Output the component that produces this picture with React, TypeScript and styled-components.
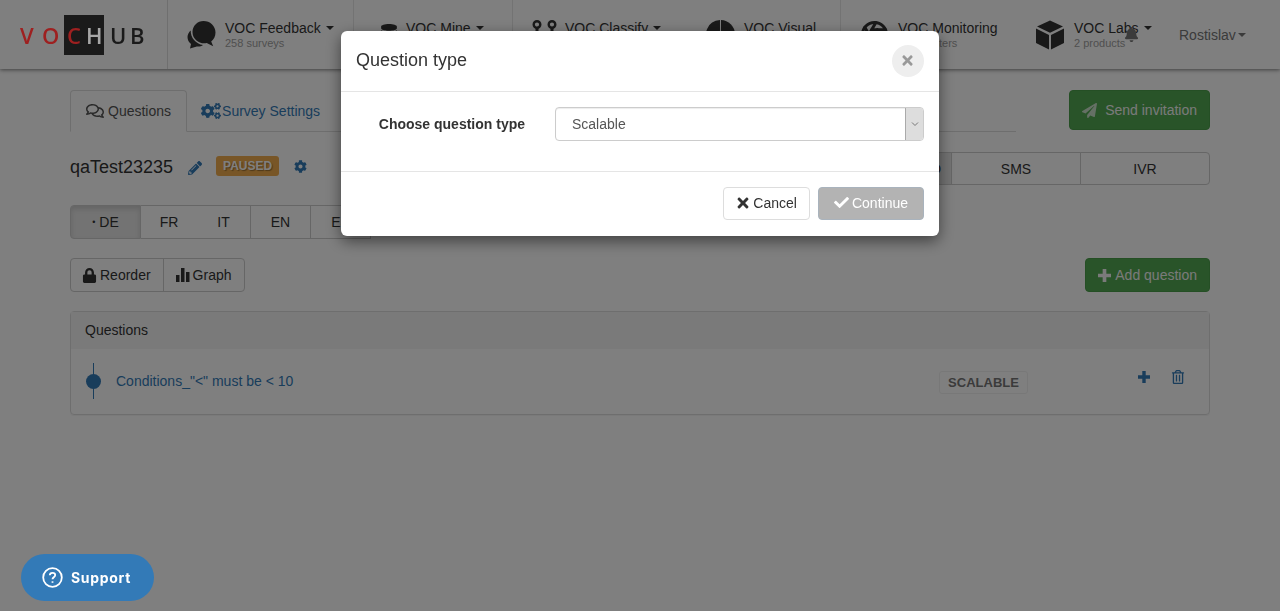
import React from "react";
import styled, { createGlobalStyle } from "styled-components";
import {
  FaBell,
  FaCheck,
  FaCog,
  FaCogs,
  FaDatabase,
  FaLock,
  FaPaperPlane,
  FaPencilAlt,
  FaRegComments,
  FaRegTrashAlt,
  FaTimes,
} from "react-icons/fa";
import { Aperture } from "lucide-react";

const GlobalStyle = createGlobalStyle`
  html, body {
    margin: 0;
    height: 100%;
    background: #fff;
    font-family: "Liberation Sans", Arial, sans-serif;
    font-size: 14px;
    color: #333;
    overflow: hidden;
  }
  * { box-sizing: border-box; }
`;

const BubblesIcon = () => (
  <svg width="29" height="29" viewBox="0 0 29 29" fill="#333">
    <path d="M16.500 1C23 1 28.500 5.800 28.500 12.500c0 3.800-1.700 6.900-4.300 9l2 4.800-6.500-3.200C13 24.500 5.500 19.800 5.500 12 5.500 5.800 10.500 1 16.500 1z" />
    <path d="M3.800 10.500C3.200 17.500 9 24 16 25c-1.800 1.300-4 1.800-6.200 1.400L3 28.500l1-4.500C1.800 22.300.5 19.800.5 17c0-2.500 1.300-5 3.300-6.500z" />
  </svg>
);

const PinsIcon = () => (
  <svg width="26" height="29" viewBox="0 0 26 29" fill="none" stroke="#333" strokeWidth="2.400">
    <circle cx="5" cy="4.500" r="3.300" />
    <path d="M5 8v16" strokeWidth="3" />
    <circle cx="20" cy="4.500" r="3.300" />
    <path d="M20 8v16" strokeWidth="3" />
  </svg>
);

const PieIcon = () => (
  <svg width="29" height="29" viewBox="0 0 28 28" fill="#333">
    <path d="M13.500 0v14l-9.800 9.500A14 14 0 0 1 13.500 0z" />
    <path d="M14.500 0A14 14 0 0 1 28 13.500H14.500z" />
    <path d="M15 15h13A14 14 0 0 1 5 25z" />
  </svg>
);

const CubeIcon = () => (
  <svg width="30" height="30" viewBox="0 0 30 30" fill="#333">
    <polygon points="15,0.500 28,6.500 15,12.800 2,6.500" />
    <polygon points="1,8.500 14,15 14,29.500 1,23" />
    <polygon points="29,8.500 16,15 16,29.500 29,23" />
  </svg>
);

const StatsIcon = () => (
  <svg width="14" height="14" viewBox="0 0 14 14" fill="#333">
    <rect x="0" y="7" width="3.500" height="7" />
    <rect x="5" y="0" width="3.500" height="14" />
    <rect x="10" y="4" width="3.500" height="10" />
  </svg>
);

const PlusIcon = ({ size }: { size: number }) => (
  <svg width={size} height={size} viewBox="0 0 12 12" fill="currentColor">
    <path d="M4.300 0h3.400v4.300H12v3.400H7.700V12H4.300V7.700H0V4.300h4.300z" />
  </svg>
);

const navItems = [
  { width: 186, pad: 19, gap: 9, border: true, icon: <BubblesIcon />, title: "VOC Feedback", sub: "258 surveys", caret: true },
  { width: 159, pad: 26, gap: 8, border: true, icon: <MineIcon />, title: "VOC Mine", sub: "12 sources", caret: true },
  { width: 173, pad: 19, gap: 7, border: false, icon: <PinsIcon />, title: "VOC Classify", sub: "3 models", caret: true },
  { width: 155, pad: 20, gap: 9, border: true, icon: <PieIcon />, title: "VOC Visual", sub: "8 charts", caret: false },
  { width: 175, pad: 19, gap: 9, border: false, icon: <Aperture size={29} color="#333" strokeWidth={2.500} />, title: "VOC Monitoring", sub: "12 reporters", caret: false },
];

const langs = ["DE", "FR", "IT", "EN", "ES"];

function MineIcon() {
  return (
    <MineIconWrap>
      <FaDatabase size={18} color="#333" />
    </MineIconWrap>
  );
}

export default function App() {
  return (
    <>
      <GlobalStyle />
      <Navbar>
        <Logo>
          <LogoLetter $tone="red" $width={22}>V</LogoLetter>
          <LogoLetter $tone="red" $width={22}>O</LogoLetter>
          <LogoBlock>
            <LogoLetter $tone="red" $width={19}>C</LogoLetter>
            <LogoLetter $tone="light" $width={18}>H</LogoLetter>
          </LogoBlock>
          <LogoTail>
            <LogoLetter $tone="dark" $width={20}>U</LogoLetter>
            <LogoLetter $tone="dark" $width={14}>B</LogoLetter>
          </LogoTail>
        </Logo>
        {navItems.map((item) => (
          <NavItem key={item.title} $width={item.width} $pad={item.pad} $gap={item.gap} $border={item.border}>
            <NavIcon>{item.icon}</NavIcon>
            <NavText>
              <NavTitle>
                {item.title}
                {item.caret && <Caret />}
              </NavTitle>
              <NavSub>{item.sub}</NavSub>
            </NavText>
          </NavItem>
        ))}
        <NavItem $width={151} $pad={19} $gap={9}>
          <NavIcon>
            <CubeIcon />
          </NavIcon>
          <NavText>
            <NavTitle>
              VOC Labs
              <Caret />
            </NavTitle>
            <NavSub>2 products</NavSub>
          </NavText>
          <Bell>
            <FaBell size={15} color="#777" />
          </Bell>
        </NavItem>
        <UserMenu>
          Rostislav
          <UserCaret />
        </UserMenu>
      </Navbar>

      <Page>
        <TabsRow>
          <Tabs>
            <Tab $active>
              <FaRegComments size={18} />
              Questions
            </Tab>
            <Tab>
              <FaCogs size={20} />
              Survey Settings
            </Tab>
          </Tabs>
          <SendButton>
            <FaPaperPlane size={15} />
            Send invitation
          </SendButton>
        </TabsRow>

        <TitleRow>
          <TitleGroup>
            <SurveyName>qaTest23235</SurveyName>
            <EditIcon>
              <FaPencilAlt size={14} />
            </EditIcon>
            <PausedBadge>PAUSED</PausedBadge>
            <SettingsIcon>
              <FaCog size={13} />
            </SettingsIcon>
          </TitleGroup>
          <Channels>
            <Channel $active>WEB / ANDROID</Channel>
            <Channel>SMS</Channel>
            <Channel>IVR</Channel>
          </Channels>
        </TitleRow>

        <LangRow>
          {langs.map((lang, i) => (
            <LangButton key={lang} $active={i === 0} $index={i}>
              {i === 0 && <LangDot>•</LangDot>}
              {lang}
            </LangButton>
          ))}
        </LangRow>

        <ToolsRow>
          <ToolGroup>
            <ToolButton>
              <LockWrap>
                <FaLock size={15} />
              </LockWrap>
              Reorder
            </ToolButton>
            <ToolButton>
              <StatsIcon />
              Graph
            </ToolButton>
          </ToolGroup>
          <AddButton>
            <PlusIcon size={13} />
            Add question
          </AddButton>
        </ToolsRow>

        <Panel>
          <PanelHeader>Questions</PanelHeader>
          <QuestionRow>
            <Timeline>
              <TimelineDot />
            </Timeline>
            <QuestionLink>Conditions_"&lt;" must be &lt; 10</QuestionLink>
            <TypeBadge>SCALABLE</TypeBadge>
            <RowActions>
              <PlusIcon size={12} />
              <FaRegTrashAlt size={14} />
            </RowActions>
          </QuestionRow>
        </Panel>
      </Page>

      <Overlay>
        <Modal>
          <ModalHeader>
            <ModalTitle>Question type</ModalTitle>
            <CloseButton>
              <FaTimes size={15} />
            </CloseButton>
          </ModalHeader>
          <ModalBody>
            <FieldLabel>Choose question type</FieldLabel>
            <SelectBox>
              <span>Scalable</span>
              <SelectArrow>
                <svg width="8" height="5" viewBox="0 0 8 5" fill="none" stroke="#777" strokeWidth="1">
                  <path d="M1 .5l3 3 3-3" />
                </svg>
              </SelectArrow>
            </SelectBox>
          </ModalBody>
          <ModalFooter>
            <CancelButton>
              <FaTimes size={16} />
              Cancel
            </CancelButton>
            <ContinueButton>
              <FaCheck size={15} />
              Continue
            </ContinueButton>
          </ModalFooter>
        </Modal>
      </Overlay>

      <SupportButton>
        <svg width="21" height="21" viewBox="0 0 21 21" fill="none" stroke="#fff" strokeWidth="1.800">
          <circle cx="10.500" cy="10.500" r="9.300" />
          <path d="M7.800 8.300c0-1.600 1.200-2.500 2.700-2.500s2.700.9 2.700 2.300c0 2.200-2.700 2.200-2.700 4.200" />
          <path d="M10.500 14.300v1.500" />
        </svg>
        Support
      </SupportButton>
    </>
  );
}

const Navbar = styled.header`
  display: flex;
  height: 69px;
  background: #fff;
  box-shadow: 0 1px 4px rgba(0, 0, 0, 0.5);
`;

const Logo = styled.div`
  position: relative;
  z-index: 1;
  width: 168px;
  flex: none;
  display: flex;
  align-items: center;
  padding-left: 20px;
  border-right: 1px solid #6f6f6f;
  font-family: "Open Sans", "Liberation Sans", sans-serif;
  font-size: 22px;
  font-weight: 600;
  line-height: 40px;
`;

const logoTones = { red: "#9e2020", light: "#a6a6a6", dark: "#1a1a1a" };

const LogoLetter = styled.span<{ $tone: keyof typeof logoTones; $width: number }>`
  width: ${({ $width }) => $width}px;
  color: ${({ $tone }) => logoTones[$tone]};
`;

const LogoBlock = styled.span`
  display: flex;
  width: 40px;
  height: 40px;
  padding-left: 3px;
  background: #1a1a1a;
`;

const LogoTail = styled.span`
  display: flex;
  margin-left: 6px;
`;

const NavItem = styled.div<{ $width: number; $pad: number; $gap: number; $border?: boolean }>`
  position: relative;
  width: ${({ $width }) => $width}px;
  flex: none;
  display: flex;
  align-items: center;
  gap: ${({ $gap }) => $gap}px;
  padding-left: ${({ $pad }) => $pad}px;
  border-right: 1px solid ${({ $border }) => ($border ? "#e7e7e7" : "transparent")};
`;

const NavIcon = styled.span`
  display: flex;
  flex: none;
`;

const MineIconWrap = styled.span`
  display: flex;
  margin-top: -4px;
`;

const NavText = styled.div`
  display: flex;
  flex-direction: column;
  white-space: nowrap;
`;

const NavTitle = styled.div`
  display: flex;
  align-items: center;
  gap: 5px;
  font-size: 14px;
  line-height: 16px;
  color: #333;
`;

const NavSub = styled.div`
  font-size: 11px;
  line-height: 14px;
  color: #a0a0a0;
`;

const Caret = styled.span`
  width: 0;
  height: 0;
  border-top: 4px solid #333;
  border-left: 4px solid transparent;
  border-right: 4px solid transparent;
`;

const Bell = styled.span`
  position: absolute;
  left: 108px;
  top: 27px;
  display: flex;
`;

const UserMenu = styled.div`
  display: flex;
  align-items: center;
  gap: 2px;
  padding-left: 12px;
  color: #777;
  font-size: 14px;
`;

const UserCaret = styled(Caret)`
  border-top-color: #777;
`;

const Page = styled.main`
  width: 1140px;
  margin: 21px 0 0 70px;
`;

const TabsRow = styled.div`
  display: flex;
  justify-content: space-between;
  height: 42px;
`;

const Tabs = styled.div`
  display: flex;
  width: 946px;
  height: 42px;
  border-bottom: 1px solid #ddd;
`;

const Tab = styled.div<{ $active?: boolean }>`
  display: flex;
  align-items: center;
  gap: ${({ $active }) => ($active ? 4 : 1)}px;
  height: 42px;
  padding: 0 ${({ $active }) => ($active ? 15 : 13)}px;
  border: 1px solid ${({ $active }) => ($active ? "#ddd" : "transparent")};
  border-bottom-color: ${({ $active }) => ($active ? "#fff" : "transparent")};
  border-radius: 4px 4px 0 0;
  color: ${({ $active }) => ($active ? "#555" : "#337ab7")};
  background: ${({ $active }) => ($active ? "#fff" : "transparent")};
`;

const SendButton = styled.div`
  display: flex;
  align-items: center;
  gap: 8px;
  height: 40px;
  padding: 0 12px;
  border-radius: 4px;
  background: #52a852;
  border: 1px solid #4a9e4a;
  color: #f4f4f4;
  & > svg {
    opacity: 0.75;
  }
`;

const TitleRow = styled.div`
  display: flex;
  justify-content: space-between;
  align-items: flex-start;
  margin-top: 20px;
`;

const TitleGroup = styled.div`
  display: flex;
  align-items: center;
  height: 28px;
`;

const SurveyName = styled.span`
  margin-top: 2px;
  font-size: 18px;
  color: #333;
`;

const EditIcon = styled.span`
  display: flex;
  color: #337ab7;
  margin: 4px 0 0 15px;
`;

const PausedBadge = styled.span`
  margin-left: 14px;
  width: 63px;
  height: 20px;
  line-height: 20px;
  text-align: center;
  border-radius: 3px;
  background: #f0ad4e;
  color: #fff;
  font-size: 12px;
  font-weight: bold;
  text-shadow: 1px 1px 1px rgba(0, 0, 0, 0.35);
`;

const SettingsIcon = styled.span`
  display: flex;
  color: #337ab7;
  margin-left: 15px;
`;

const Channels = styled.div`
  display: flex;
  height: 33px;
`;

const Channel = styled.div<{ $active?: boolean }>`
  width: ${({ $active }) => ($active ? 129 : 130)}px;
  display: flex;
  align-items: center;
  justify-content: center;
  margin-left: -1px;
  white-space: nowrap;
  border: 1px solid #ccc;
  background: ${({ $active }) => ($active ? "#e6e6e6" : "#fff")};
  color: #333;
  &:first-child {
    border-radius: 4px 0 0 4px;
  }
  &:last-child {
    border-radius: 0 4px 4px 0;
  }
`;

const LangRow = styled.div`
  display: flex;
  margin-top: 20px;
  height: 34px;
`;

const langWidths = [71, 56, 54, 60, 60];

const LangButton = styled.div<{ $active: boolean; $index: number }>`
  width: ${({ $index }) => langWidths[$index]}px;
  display: flex;
  align-items: center;
  justify-content: center;
  border-style: solid;
  border-color: #ccc;
  border-width: 1px ${({ $index }) => ($index === 1 ? 0 : 1)}px 1px ${({ $index }) => ($index === 0 ? 1 : 0)}px;
  background: ${({ $active }) => ($active ? "#e6e6e6" : "#fff")};
  box-shadow: ${({ $active }) => ($active ? "inset 0 3px 5px rgba(0, 0, 0, 0.125)" : "none")};
  border-radius: ${({ $index }) => ($index === 0 ? "4px 0 0 4px" : "0")};
  color: #333;
`;

const LangDot = styled.span`
  font-size: 9px;
  margin-right: 4px;
`;

const ToolsRow = styled.div`
  display: flex;
  justify-content: space-between;
  margin-top: 19px;
`;

const ToolGroup = styled.div`
  display: flex;
  height: 34px;
  border: 1px solid #ccc;
  border-radius: 4px;
`;

const ToolButton = styled.div`
  display: flex;
  align-items: center;
  gap: 3px;
  padding: 0 12px;
  color: #333;
  & + & {
    border-left: 1px solid #ccc;
  }
`;

const LockWrap = styled.span`
  display: flex;
  margin-left: -1px;
`;

const AddButton = styled.div`
  display: flex;
  align-items: center;
  gap: 4px;
  height: 34px;
  padding: 0 12px;
  border-radius: 4px;
  background: #52a852;
  border: 1px solid #4a9e4a;
  color: #f4f4f4;
`;

const Panel = styled.section`
  margin-top: 19px;
  height: 104px;
  border: 1px solid #ddd;
  border-radius: 4px;
  box-shadow: 0 1px 1px rgba(0, 0, 0, 0.05);
`;

const PanelHeader = styled.div`
  height: 37px;
  padding: 0 14px;
  line-height: 37px;
  background: #f5f5f5;
  color: #333;
`;

const QuestionRow = styled.div`
  position: relative;
  display: flex;
  align-items: center;
  height: 64px;
  padding-left: 15px;
`;

const Timeline = styled.div`
  position: relative;
  width: 15px;
  height: 36px;
  display: flex;
  align-items: center;
  justify-content: center;
  &::before {
    content: "";
    position: absolute;
    left: 7px;
    top: 0;
    bottom: 0;
    width: 1px;
    background: #337ab7;
  }
`;

const TimelineDot = styled.span`
  position: relative;
  width: 15px;
  height: 15px;
  border-radius: 50%;
  background: #337ab7;
`;

const QuestionLink = styled.span`
  margin-left: 15px;
  color: #337ab7;
`;

const TypeBadge = styled.span`
  position: absolute;
  left: 868px;
  top: 22px;
  width: 89px;
  height: 23px;
  line-height: 22px;
  text-align: center;
  border: 1px solid #f0f0f0;
  border-radius: 3px;
  color: #777;
  font-size: 13px;
  font-weight: bold;
`;

const RowActions = styled.div`
  position: absolute;
  left: 1067px;
  top: 21px;
  display: flex;
  align-items: center;
  gap: 21px;
  color: #337ab7;
`;

const Overlay = styled.div`
  position: fixed;
  inset: 0;
  display: flex;
  justify-content: center;
  padding-top: 31px;
  background: rgba(0, 0, 0, 0.5);
`;

const Modal = styled.div`
  width: 598px;
  height: 205px;
  background: #fff;
  border-radius: 6px;
  box-shadow: 0 5px 15px rgba(0, 0, 0, 0.5);
`;

const ModalHeader = styled.div`
  display: flex;
  align-items: center;
  justify-content: space-between;
  height: 61px;
  padding: 0 15px;
  border-bottom: 1px solid #e5e5e5;
`;

const ModalTitle = styled.h4`
  margin: 0 0 2px;
  font-size: 18px;
  font-weight: normal;
  color: #333;
`;

const CloseButton = styled.div`
  width: 32px;
  height: 32px;
  display: flex;
  align-items: center;
  justify-content: center;
  padding: 0 1px 2px 0;
  border-radius: 50%;
  background: #eee;
  color: #999;
`;

const ModalBody = styled.div`
  display: flex;
  align-items: flex-start;
  height: 80px;
  padding: 15px 15px 0 0;
  border-bottom: 1px solid #e5e5e5;
`;

const FieldLabel = styled.label`
  width: 184px;
  text-align: right;
  font-weight: bold;
  line-height: 34px;
  color: #333;
`;

const SelectBox = styled.div`
  display: flex;
  align-items: center;
  justify-content: space-between;
  margin-left: 30px;
  flex: 1;
  height: 34px;
  padding-left: 16px;
  border: 1px solid #ccc;
  border-radius: 4px;
  color: #555;
  box-shadow: inset 0 1px 1px rgba(0, 0, 0, 0.075);
  overflow: hidden;
`;

const SelectArrow = styled.span`
  width: 18px;
  height: 100%;
  display: flex;
  align-items: center;
  justify-content: center;
  background: #ddd;
  border-left: 1px solid #aaa;
`;

const ModalFooter = styled.div`
  display: flex;
  justify-content: flex-end;
  gap: 8px;
  padding: 15px;
`;

const CancelButton = styled.div`
  display: flex;
  align-items: center;
  gap: 2px;
  height: 33px;
  padding: 0 12px 2px 11px;
  background: #fff;
  border: 1px solid #ddd;
  border-radius: 4px;
  color: #333;
`;

const ContinueButton = styled.div`
  display: flex;
  align-items: center;
  gap: 3px;
  height: 33px;
  padding: 0 15px 2px;
  background: #b3b3b3;
  border: 1px solid #a9b3bd;
  border-radius: 4px;
  color: #fff;
`;

const SupportButton = styled.div`
  position: fixed;
  left: 21px;
  top: 554px;
  width: 133px;
  height: 47px;
  display: flex;
  align-items: center;
  justify-content: center;
  gap: 8px;
  padding-right: 2px;
  border-radius: 24px;
  background: #337ab7;
  color: #fff;
  font-family: Inter, "Liberation Sans", sans-serif;
  font-size: 14px;
  font-weight: 700;
  letter-spacing: 0.7px;
`;
